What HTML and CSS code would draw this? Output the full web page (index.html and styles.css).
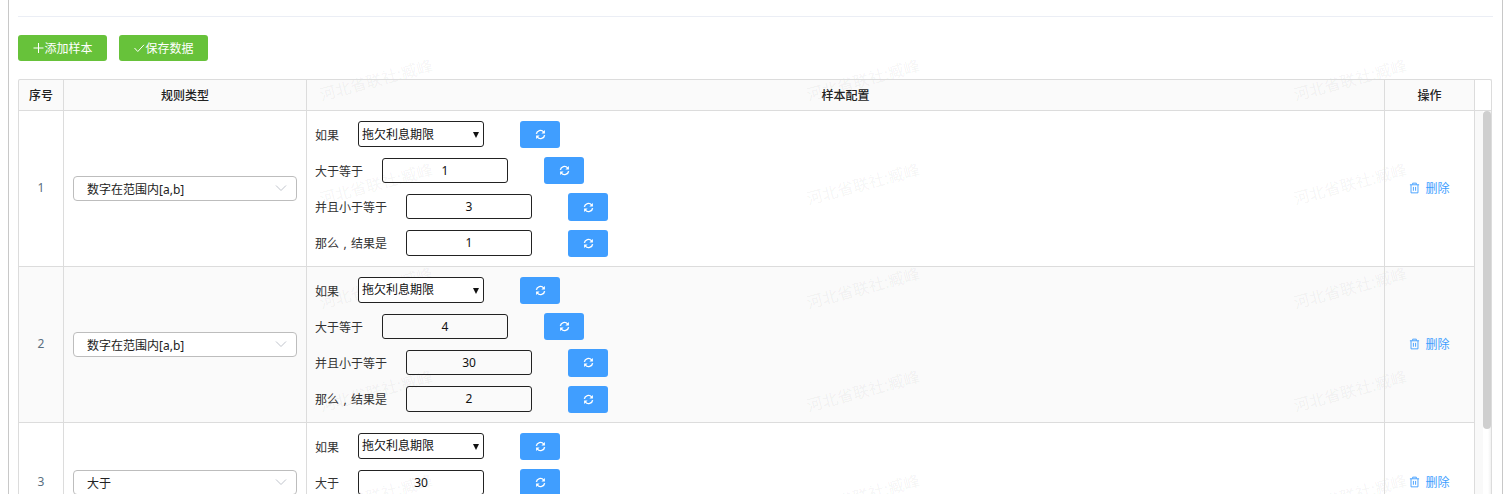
FILE: index.html
```html
<!DOCTYPE html>
<html lang="zh-CN">
<head>
<meta charset="utf-8">
<title>样本配置</title>
<link rel="stylesheet" href="styles.css">
</head>
<body>
<svg class="defs" width="0" height="0" aria-hidden="true">
  <symbol id="refresh" viewBox="0 0 12 12">
    <path d="M1.5 5.4A4.5 4.5 0 0 1 9.4 3.1" fill="none" stroke="currentColor" stroke-width="1.5"/>
    <path d="M10.5 6.6A4.5 4.5 0 0 1 2.6 8.9" fill="none" stroke="currentColor" stroke-width="1.5"/>
    <path d="M10.8 1.2V5H7ZM1.2 10.8V7H5Z" fill="currentColor"/>
  </symbol>
  <symbol id="trash" viewBox="0 0 12 12">
    <path d="M1 2.5H11M4 2.3V.7H8V2.3M2.2 2.5V11.3H9.8V2.5M4.8 4.8V9M7.2 4.8V9" fill="none" stroke="currentColor" stroke-width="1"/>
  </symbol>
  <symbol id="chevron" viewBox="0 0 12 12">
    <path d="M1 3.5L6 8.5L11 3.5" fill="none" stroke="currentColor" stroke-width="1"/>
  </symbol>
  <symbol id="plus" viewBox="0 0 12 12">
    <path d="M6.5 1V11M1.5 6H11.5" fill="none" stroke="currentColor" stroke-width="1"/>
  </symbol>
  <symbol id="check" viewBox="0 0 12 12">
    <path d="M1.5 6L4.8 9.5L11 2.8" fill="none" stroke="currentColor" stroke-width="1"/>
  </symbol>
</svg>
<div class="marks" aria-hidden="true">
  <span class="wm m1 x1">河北省联社:臧峰</span><span class="wm m1 x2">河北省联社:臧峰</span><span class="wm m1 x3">河北省联社:臧峰</span>
  <span class="wm m2 x1">河北省联社:臧峰</span><span class="wm m2 x2">河北省联社:臧峰</span><span class="wm m2 x3">河北省联社:臧峰</span>
  <span class="wm m3 x1">河北省联社:臧峰</span><span class="wm m3 x2">河北省联社:臧峰</span><span class="wm m3 x3">河北省联社:臧峰</span>
  <span class="wm m4 x1">河北省联社:臧峰</span><span class="wm m4 x2">河北省联社:臧峰</span><span class="wm m4 x3">河北省联社:臧峰</span>
  <span class="wm m5 x1">河北省联社:臧峰</span><span class="wm m5 x2">河北省联社:臧峰</span><span class="wm m5 x3">河北省联社:臧峰</span>
</div>
<div class="page">
  <hr class="rule">
  <div class="toolbar">
    <button class="btn-green"><svg class="ico-tool"><use href="#plus"/></svg>添加样本</button>
    <button class="btn-green"><svg class="ico-tool"><use href="#check"/></svg>保存数据</button>
  </div>
  <div class="table">
    <div class="thead">
      <div class="th c-no">序号</div>
      <div class="th c-type">规则类型</div>
      <div class="th c-conf">样本配置</div>
      <div class="th c-op">操作</div>
      <div class="th c-gut"></div>
    </div>
    <div class="tbody-wrap">
      <div class="tbody">
        <div class="tr">
          <div class="td c-no num">1</div>
          <div class="td c-type"><div class="el-select"><span class="el-text">数字在范围内[a,b]</span><svg class="chev"><use href="#chevron"/></svg></div></div>
          <div class="td c-conf conf">
            <div class="line"><span class="lab">如果</span><span class="sel-wrap"><select class="sel"><option>拖欠利息期限</option></select></span><button class="btn-blue"><svg class="ico"><use href="#refresh"/></svg></button></div>
            <div class="line"><span class="lab">大于等于</span><input class="inp" value="1"><button class="btn-blue"><svg class="ico"><use href="#refresh"/></svg></button></div>
            <div class="line"><span class="lab">并且小于等于</span><input class="inp" value="3"><button class="btn-blue"><svg class="ico"><use href="#refresh"/></svg></button></div>
            <div class="line"><span class="lab">那么<span class="comma">,</span>结果是</span><input class="inp" value="1"><button class="btn-blue"><svg class="ico"><use href="#refresh"/></svg></button></div>
          </div>
          <div class="td c-op"><a class="del"><svg class="ico-del"><use href="#trash"/></svg>删除</a></div>
        </div>
        <div class="tr alt">
          <div class="td c-no num">2</div>
          <div class="td c-type"><div class="el-select"><span class="el-text">数字在范围内[a,b]</span><svg class="chev"><use href="#chevron"/></svg></div></div>
          <div class="td c-conf conf">
            <div class="line"><span class="lab">如果</span><span class="sel-wrap"><select class="sel"><option>拖欠利息期限</option></select></span><button class="btn-blue"><svg class="ico"><use href="#refresh"/></svg></button></div>
            <div class="line"><span class="lab">大于等于</span><input class="inp" value="4"><button class="btn-blue"><svg class="ico"><use href="#refresh"/></svg></button></div>
            <div class="line"><span class="lab">并且小于等于</span><input class="inp" value="30"><button class="btn-blue"><svg class="ico"><use href="#refresh"/></svg></button></div>
            <div class="line"><span class="lab">那么<span class="comma">,</span>结果是</span><input class="inp" value="2"><button class="btn-blue"><svg class="ico"><use href="#refresh"/></svg></button></div>
          </div>
          <div class="td c-op"><a class="del"><svg class="ico-del"><use href="#trash"/></svg>删除</a></div>
        </div>
        <div class="tr">
          <div class="td c-no num">3</div>
          <div class="td c-type"><div class="el-select"><span class="el-text">大于</span><svg class="chev"><use href="#chevron"/></svg></div></div>
          <div class="td c-conf conf">
            <div class="line"><span class="lab">如果</span><span class="sel-wrap"><select class="sel"><option>拖欠利息期限</option></select></span><button class="btn-blue"><svg class="ico"><use href="#refresh"/></svg></button></div>
            <div class="line"><span class="lab">大于</span><input class="inp" value="30"><button class="btn-blue"><svg class="ico"><use href="#refresh"/></svg></button></div>
            <div class="line"><span class="lab">那么<span class="comma">,</span>结果是</span><input class="inp" value="1"><button class="btn-blue"><svg class="ico"><use href="#refresh"/></svg></button></div>
          </div>
          <div class="td c-op"><a class="del"><svg class="ico-del"><use href="#trash"/></svg>删除</a></div>
        </div>
      </div>
      <div class="scrollbar"><div class="thumb"></div></div>
    </div>
  </div>
</div>
</body>
</html>
```
FILE: styles.css
```css
* { box-sizing: border-box; }
html, body { margin: 0; height: 494px; overflow: hidden; background: #fff; }
body {
  position: relative;
  font-family: "Noto Sans", "Noto Sans CJK SC", sans-serif;
  font-size: 12px;
  color: #333;
}
.defs { position: absolute; }
.page {
  position: relative;
  z-index: 1;
  margin: 0 8px;
  width: 1495px;
  height: 494px;
  padding: 16px 9px 0 9px;
  border-left: 1px solid #c8c8c8;
  border-right: 1px solid #c8c8c8;
}
.rule { margin: 0; border: 0; height: 1px; background: #ebeef5; }
.toolbar { display: flex; gap: 12px; margin-top: 18px; }
.btn-green {
  width: 89px;
  height: 26px;
  padding: 0;
  border: 0;
  border-radius: 3px;
  background: #67c23a;
  color: #fff;
  font: inherit;
  display: flex;
  align-items: center;
  justify-content: center;
}
.ico-tool { width: 12px; height: 12px; }
.table {
  margin-top: 18px;
  width: 1474px;
  border: 1px solid #dcdcdc;
  border-bottom: 0;
  border-radius: 2px;
}
.thead { display: flex; height: 31px; border-bottom: 1px solid #dcdcdc; }
.th {
  background: rgba(0, 0, 0, .02);
  border-right: 1px solid #dcdcdc;
  display: flex;
  align-items: center;
  justify-content: center;
  font-weight: 500;
  color: #222;
}
.c-no { width: 45px; flex: none; }
.c-type { width: 243px; flex: none; }
.c-conf { width: 1078px; flex: none; }
.c-op { width: 90px; flex: none; }
.th.c-gut { flex: 1; border-right: 0; background: transparent; }
.tbody-wrap { display: flex; }
.tbody { width: 1456px; flex: none; }
.scrollbar {
  flex: 1;
  padding-left: 8px;
  background: linear-gradient(to right, #f9f9f9 8px, #fff 8px, #fff 13px, #f1f1f1 16px);
}
.thumb { height: 318px; background: #cfcfcf; border-radius: 4px; }
.tr { display: flex; border-bottom: 1px solid #dcdcdc; }
.tr.alt { background: rgba(0, 0, 0, .02); }
.td {
  border-right: 1px solid #dcdcdc;
  display: flex;
  align-items: center;
  justify-content: center;
}
.num { color: #5a6f80; padding-bottom: 2px; }
.el-select {
  width: 224px;
  height: 25px;
  border: 1px solid #bdbdbd;
  border-radius: 4px;
  padding: 0 9px 0 13px;
  display: flex;
  align-items: center;
  justify-content: space-between;
  background: #fff;
  color: #222;
}
.el-text { padding-top: 1px; }
.chev { width: 12px; height: 12px; color: #c0c4cc; }
.conf {
  flex-direction: column;
  align-items: flex-start;
  justify-content: flex-start;
  padding: 10px 0 9.15px 8px;
  row-gap: 8.95px;
}
.line { display: flex; align-items: center; height: 27.25px; }
.lab { margin-right: 19px; color: #333; white-space: nowrap; }
.comma { display: inline-block; width: 12px; text-align: center; }
.sel-wrap { position: relative; display: block; width: 126px; height: 26px; align-self: flex-start; }
.sel-wrap::after {
  content: "";
  position: absolute;
  right: 5px;
  top: 11px;
  border-left: 3.5px solid transparent;
  border-right: 3.5px solid transparent;
  border-top: 6px solid #111;
}
.sel {
  appearance: none;
  width: 126px;
  height: 26px;
  padding: 0 0 0 3px;
  border: 1px solid #222;
  border-radius: 3px;
  background: #fff;
  color: #111;
  font: inherit;
}
.inp {
  align-self: flex-start;
  margin-top: .5px;
  width: 126px;
  height: 25.5px;
  padding: 0;
  border: 1px solid #222;
  border-radius: 3px;
  background: transparent;
  text-align: center;
  color: #111;
  font: inherit;
}
.btn-blue {
  width: 40px;
  height: 27.25px;
  margin-left: 36px;
  padding: 0;
  border: 0;
  border-radius: 3px;
  background: #409eff;
  color: #fff;
  display: flex;
  align-items: center;
  justify-content: center;
}
.ico { width: 11px; height: 11px; }
.ico-del { width: 11px; height: 12px; }
.del { display: flex; align-items: center; gap: 5px; color: #409eff; }
.marks { position: absolute; inset: 0; overflow: hidden; }
.wm {
  position: absolute;
  width: 120px;
  font-size: 16px;
  line-height: 20px;
  text-align: center;
  white-space: nowrap;
  color: rgba(0, 0, 0, .055);
  transform: rotate(-15deg);
}
.x1 { left: 316px; }
.x2 { left: 803px; }
.x3 { left: 1290px; }
.m1 { top: 70px; }
.m2 { top: 174px; }
.m3 { top: 278px; }
.m4 { top: 381px; }
.m5 { top: 485px; }
```
